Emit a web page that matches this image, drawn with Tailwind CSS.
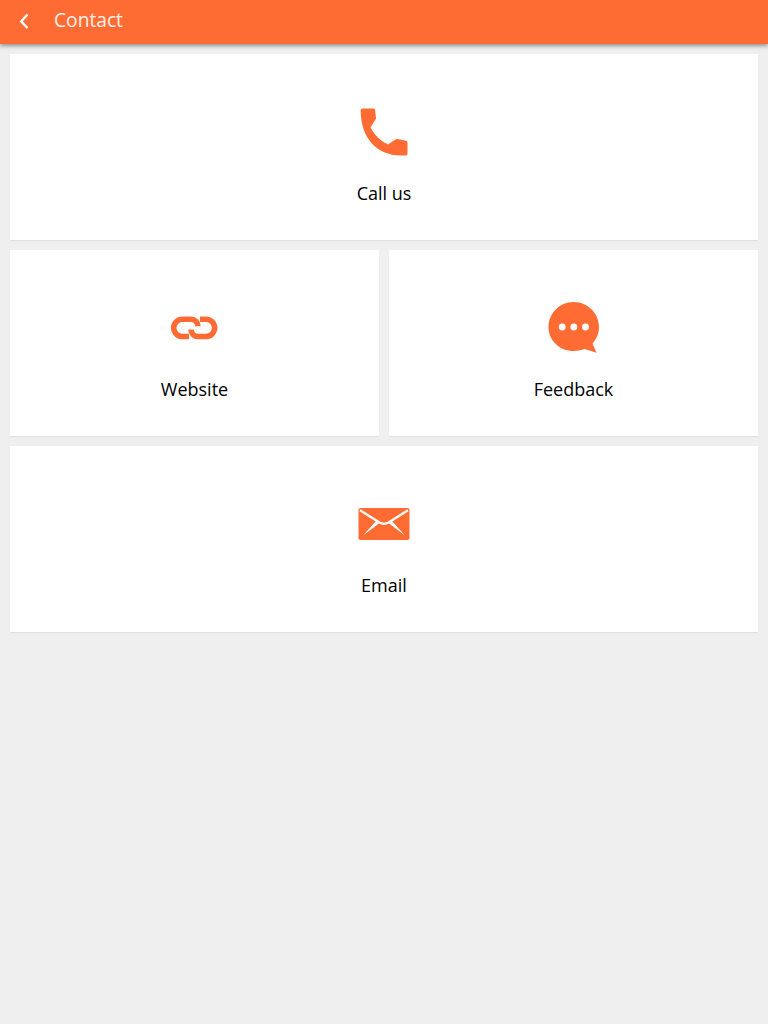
<!DOCTYPE html>
<html>
<head>
<meta charset="utf-8">
<script src="https://cdn.jsdelivr.net/npm/@tailwindcss/browser@4"></script>
</head>
<body class="m-0 bg-[#efefef] font-['Open_Sans',sans-serif]">
<div class="w-[768px] h-[1024px] flex flex-col bg-[#efefef]">
  <header class="h-[44px] pb-[2px] bg-[#ff6c33] shadow-[0_2px_4px_rgba(0,0,0,0.4)] flex items-center text-white shrink-0">
    <svg class="ml-[18px] w-[12px] h-[18px]" viewBox="0 0 12 18" fill="none" stroke="#fff" stroke-width="2.400"><path d="M9.500 2.500 3.200 9.500l6.300 6.500"/></svg>
    <span class="ml-[24px] mb-[2px] text-[19.2px] leading-[24px] font-normal text-white/90">Contact</span>
  </header>
  <main class="p-[10px] grid grid-cols-2 gap-[10px] content-start">
    <a class="col-span-2 h-[186px] bg-white shadow-[0_1px_1px_rgba(0,0,0,0.06)] flex flex-col items-center pt-[50px]">
      <svg class="w-[56px] h-[56px]" viewBox="0 0 56 56" fill="#ff6c33"><path d="M6.500 4.500h11c.9 0 1.400.5 1.500 1.300l1 8c.1.800-.1 1.400-.7 2L14.500 23.500c4 7.500 10 13.500 17.500 17l7.500-5c.6-.4 1.200-.6 2-.5l8.300 1.800c1.200.3 1.700 1 1.700 2v10.500c0 1.500-.8 2.200-2 2.200h-4.500C20 51.500 4.700 33 4.700 6.500c0-1.300.6-2 1.800-2z"/></svg>
      <span class="mt-[22px] text-[18px] leading-[22px] text-black">Call us</span>
    </a>
    <a class="h-[186px] bg-white shadow-[0_1px_1px_rgba(0,0,0,0.06)] flex flex-col items-center pt-[50px]">
      <svg class="w-[56px] h-[56px]" viewBox="0 0 56 56" fill="none" stroke="#ff6c33" stroke-width="5.500"><path d="M22 36.500H15.350a8.650 8.650 0 0 1 0-17.300H24a7 7 0 0 1 7 7"/><path d="M33 19.200h6a8.650 8.650 0 0 1 0 17.300H31a7 7 0 0 1-7-7"/></svg>
      <span class="mt-[22px] text-[18px] leading-[22px] text-black">Website</span>
    </a>
    <a class="h-[186px] bg-white shadow-[0_1px_1px_rgba(0,0,0,0.06)] flex flex-col items-center pt-[50px]">
      <svg class="w-[56px] h-[56px]" viewBox="0 0 56 56"><path fill="#ff6c33" d="M27.500 2c14 0 25.500 11 25.500 25 0 6.500-2.500 12-6.500 16.500l4 9.300-12-3.800c-3.300 1.300-7 2-11 2C13.500 51 2.500 40.500 2.500 27S13.500 2 27.500 2z"/><circle cx="16.200" cy="27" r="3.400" fill="#fff"/><circle cx="27.800" cy="27" r="3.400" fill="#fff"/><circle cx="39.500" cy="27" r="3.400" fill="#fff"/></svg>
      <span class="mt-[22px] text-[18px] leading-[22px] text-black">Feedback</span>
    </a>
    <a class="col-span-2 h-[186px] bg-white shadow-[0_1px_1px_rgba(0,0,0,0.06)] flex flex-col items-center pt-[50px]">
      <svg class="w-[56px] h-[56px]" viewBox="0 0 56 56"><rect x="2.500" y="12" width="51" height="32" rx="2" fill="#ff6c33"/><path fill="none" stroke="#fff" stroke-width="2.200" d="M4 14.300 23.500 26.500c3 1.700 6 1.700 9 0L52 14.300"/><path fill="#fff" d="M20 25l3 2.500L7.300 39.200zM36 25l-3 2.500 15.700 11.700z"/></svg>
      <span class="mt-[22px] text-[18px] leading-[22px] text-black">Email</span>
    </a>
  </main>
</div>
</body>
</html>
